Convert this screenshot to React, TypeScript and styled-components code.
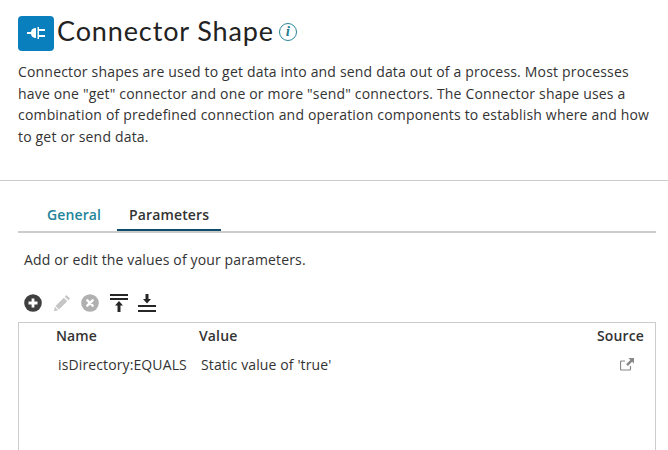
import styled, { createGlobalStyle } from "styled-components";

const GlobalStyle = createGlobalStyle`
  html, body {
    margin: 0;
    padding: 0;
    background: #fff;
    overflow: hidden;
  }
  body {
    font-family: "Open Sans", sans-serif;
    font-size: 14px;
    letter-spacing: 0.14px;
    color: #333;
  }
`;

const rows = [{ name: "isDirectory:EQUALS", value: "Static value of 'true'" }];

const App = () => {
  return (
    <Page>
      <GlobalStyle />
      <Header>
        <TitleRow>
          <ShapeBadge>
            <svg width="18" height="12" viewBox="0 0 18 12" fill="#fff">
              <path d="M0 5h4C4.300 2.600 6.200 1 9 1v10C6.200 11 4.300 9.400 4 7H0z" />
              <path d="M10.500 0H12v12h-1.500z" />
              <path d="M12 2h6v2h-6zM12 8h6v2h-6z" />
            </svg>
          </ShapeBadge>
          <Title>Connector Shape</Title>
          <InfoIcon>i</InfoIcon>
        </TitleRow>
        <Intro>
          Connector shapes are used to get data into and send data out of a process. Most processes
          have one "get" connector and one or more "send" connectors. The Connector shape uses a
          combination of predefined connection and operation components to establish where and how
          to get or send data.
        </Intro>
      </Header>

      <Body>
        <Tabs>
          <Tab>General</Tab>
          <Tab $active>Parameters</Tab>
        </Tabs>
        <Hint>Add or edit the values of your parameters.</Hint>

        <Toolbar>
          <ToolButton>
            <svg width="18" height="18" viewBox="0 0 18 18">
              <circle cx="9" cy="9" r="8.800" fill="#3f3f3f" />
              <path d="M7.600 4.500h2.800v3.100h3.100v2.800h-3.100v3.100H7.600v-3.100H4.500V7.600h3.100z" fill="#fff" />
            </svg>
          </ToolButton>
          <ToolButton>
            <svg width="18" height="18" viewBox="0 0 18 18" fill="#c6c6c6">
              <path d="M13.500 1l3.500 3.500-1.700 1.700-3.500-3.500zM10.800 3.700l3.500 3.500L6 15.500 2.500 12z" />
              <path d="M1.800 12.800l3.400 3.400-4.200 1z" />
            </svg>
          </ToolButton>
          <ToolButton>
            <svg width="18" height="18" viewBox="0 0 18 18">
              <circle cx="9" cy="9" r="8.800" fill="#b0b0b0" />
              <path d="M6.300 6.300l5.400 5.400M11.700 6.300l-5.400 5.400" stroke="#fff" strokeWidth="2.400" strokeLinecap="round" />
            </svg>
          </ToolButton>
          <ToolButton>
            <svg width="18" height="18" viewBox="0 0 18 18" fill="#262626">
              <path d="M0 0h18v2H0zM0 4h18v2H0z" />
              <path d="M9 7l4 4.500h-2.500V18h-3v-6.500H5z" />
            </svg>
          </ToolButton>
          <ToolButton>
            <svg width="18" height="18" viewBox="0 0 18 18" fill="#262626">
              <path d="M7.500 0h3v5h2.500L9 9.500 5 5h2.500z" />
              <path d="M0 11h18v2H0zM0 16h18v2H0z" />
            </svg>
          </ToolButton>
        </Toolbar>

        <Table>
          <HeadRow>
            <NameHead>Name</NameHead>
            <ValueHead>Value</ValueHead>
            <SourceHead>Source</SourceHead>
          </HeadRow>
          {rows.map((row) => (
            <Row key={row.name}>
              <NameCell>{row.name}</NameCell>
              <ValueCell>{row.value}</ValueCell>
              <SourceCell>
                <svg width="14" height="13" viewBox="0 0 14 13" fill="none">
                  <path d="M10.500 8v3a1 1 0 0 1-1 1h-8a1 1 0 0 1-1-1V4a1 1 0 0 1 1-1h3.500" stroke="#888" strokeWidth="1.200" />
                  <path d="M8.500 0H14v5.500l-1.900-1.700-4.200 4.300-1.800-1.800 4.300-4.200z" fill="#888" />
                </svg>
              </SourceCell>
            </Row>
          ))}
        </Table>
      </Body>
    </Page>
  );
};
export default App;

const Page = styled.div`
  width: 668px;
  height: 450px;
  overflow: hidden;
`;

const Header = styled.header`
  height: 181px;
  box-sizing: border-box;
  padding: 16px 18px 0;
  border-bottom: 1px solid #ccc;
`;

const TitleRow = styled.div`
  display: flex;
  align-items: center;
  height: 35px;
`;

const ShapeBadge = styled.div`
  width: 36px;
  height: 35px;
  padding-bottom: 2px;
  box-sizing: border-box;
  border-radius: 4px;
  background: #0a7fbd;
  display: flex;
  align-items: center;
  justify-content: center;
`;

const Title = styled.h1`
  margin: 0 0 6px 3px;
  font-family: "Lato", sans-serif;
  font-size: 27px;
  font-weight: 400;
  letter-spacing: 0.88px;
  color: #222;
`;

const InfoIcon = styled.span`
  width: 18px;
  height: 18px;
  box-sizing: border-box;
  margin: 0 0 4px 5px;
  border: 1.500px solid #2a8596;
  border-radius: 50%;
  display: flex;
  align-items: center;
  justify-content: center;
  font-family: "Liberation Serif", serif;
  font-style: italic;
  font-weight: 700;
  font-size: 15px;
  color: #2a7f90;
`;

const Intro = styled.p`
  margin: 10px 0 0;
  line-height: 21.500px;
  font-size: 14px;
  letter-spacing: 0.18px;
  width: 640px;
`;

const Body = styled.main`
  padding: 0 12px 0 18px;
`;

const Tabs = styled.nav`
  display: flex;
  height: 52px;
  box-sizing: border-box;
  padding-left: 17px;
  align-items: flex-end;
  border-bottom: 2px solid #ccc;
  gap: 4px;
`;

const Tab = styled.div<{ $active?: boolean }>`
  height: 32px;
  box-sizing: border-box;
  padding: 0 12px;
  font-weight: 600;
  letter-spacing: 0.12px;
  line-height: 32px;
  color: ${(props) => (props.$active ? "#333" : "#23849a")};
  border-bottom: 2px solid ${(props) => (props.$active ? "#0f4c68" : "transparent")};
`;

const Hint = styled.p`
  margin: 17px 0 0 6px;
  line-height: 20px;
`;

const Toolbar = styled.div`
  display: flex;
  align-items: center;
  gap: 10.500px;
  margin: 22px 0 0 6px;
  height: 22px;
`;

const ToolButton = styled.span`
  display: flex;
`;

const Table = styled.section`
  margin-top: 8px;
  height: 200px;
  border: 1px solid #ccc;
`;

const HeadRow = styled.div`
  display: flex;
  align-items: center;
  height: 24px;
  font-weight: 600;
`;

const NameHead = styled.div`
  width: 143px;
  padding-left: 37px;
`;

const ValueHead = styled.div`
  flex: 1;
`;

const SourceHead = styled.div`
  padding-right: 11px;
`;

const Row = styled.div`
  display: flex;
  align-items: center;
  height: 35px;
  letter-spacing: 0.12px;
`;

const NameCell = styled.div`
  width: 143px;
  padding-left: 39px;
  white-space: nowrap;
`;

const ValueCell = styled.div`
  flex: 1;
`;

const SourceCell = styled.div`
  display: flex;
  padding-right: 21px;
`;
